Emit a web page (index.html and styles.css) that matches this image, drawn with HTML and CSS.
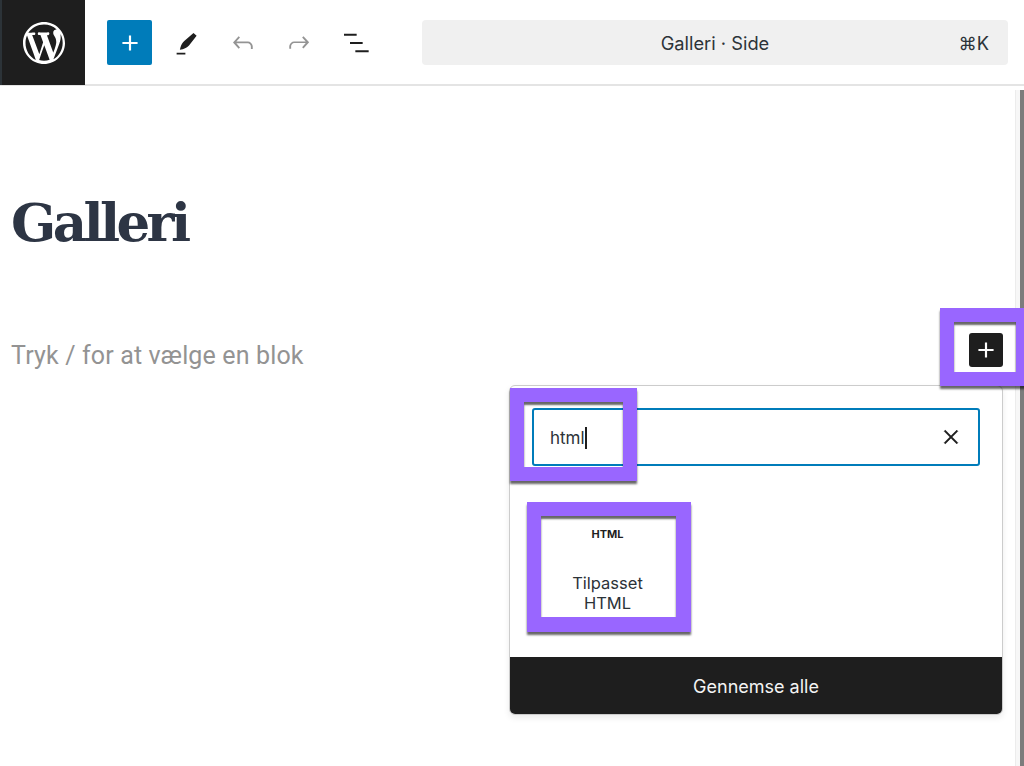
FILE: index.html
```html
<!DOCTYPE html>
<html lang="da">
<head>
<meta charset="utf-8">
<title>Galleri</title>
<link rel="stylesheet" href="styles.css">
</head>
<body>
<header class="topbar">
  <div class="logo">
    <svg width="42" height="42" viewBox="0 0 20 20" fill="#fff"><path d="M20 10c0-5.510-4.490-10-10-10C4.480 0 0 4.490 0 10c0 5.520 4.480 10 10 10 5.510 0 10-4.480 10-10zM7.780 15.370L4.370 6.220c.55-.020 1.170-.080 1.170-.080.5-.060.44-1.130-.060-1.110 0 0-1.450.11-2.370.11-.18 0-.37 0-.58-.010C4.120 2.820 6.890 1.200 10 1.200c2.320 0 4.430.87 6.030 2.340-.68-.11-1.650.39-1.650 1.580 0 .74.450 1.360.9 2.100.350.610.550 1.360.550 2.460 0 1.490-1.400 5-1.400 5l-3.030-8.370c.54-.020.82-.17.82-.17.5-.050.44-1.250-.060-1.220 0 0-1.440.12-2.380.12-.87 0-2.330-.12-2.330-.12-.5-.030-.560 1.200-.060 1.220l.92.080 1.260 3.410zM17.410 10c.24-.640.740-1.870.43-4.250.7 1.290 1.050 2.770 1.050 4.250 0 3.290-1.730 6.240-4.400 7.780.97-2.590 1.940-5.200 2.920-7.780zM6.100 18.090C3.120 16.650 1.200 13.530 1.200 10c0-1.300.23-2.480.72-3.590C3.250 10.030 4.580 13.660 6.100 18.090zM10.130 11.120l2.550 6.910c-.86.3-1.740.45-2.680.45-.79 0-1.570-.11-2.300-.33.8-2.360 1.590-4.700 2.430-7.030z"/></svg>
  </div>
  <div class="tools">
    <button class="tool add" aria-label="Tilføj">
      <svg width="26" height="26" viewBox="0 0 24 24"><path d="M11 5h2v6h6v2h-6v6h-2v-6H5v-2h6z" fill="#fff"/></svg>
    </button>
    <span class="tool">
      <svg width="30" height="30" viewBox="0 0 24 24"><path d="M20.500 6.200 18 3.900 10.600 10.300c-1.300 1.200-2.500 3-3 5.100l-.5 2 2.300-.5c2-.4 3.600-1.500 5-2.900zM4.500 19.700h7v1.500h-7z" fill="#1e1e1e"/></svg>
    </span>
    <span class="tool">
      <svg width="30" height="30" viewBox="0 0 24 24"><path d="M18.300 11.700c-.6-.6-1.400-.9-2.300-.9H6.700l2.900-3.300-1.100-1-4.500 5L8.500 16.500l1.100-1-2.900-3.300H16c.5 0 .9.200 1.300.5.900.7 1 1.600 1 2.500v1.500h1.500V15c0-1.200-.4-2.400-1.500-3.300z" fill="#949494"/></svg>
    </span>
    <span class="tool">
      <svg width="30" height="30" viewBox="0 0 24 24"><path d="M15.600 6.500l-1.100 1 2.900 3.300H8c-.9 0-1.700.3-2.300.9-1.100.9-1.500 2.100-1.500 3.300v1.500h1.500V15c0-.9.100-1.800 1-2.500.4-.3.800-.5 1.300-.5h9.400l-2.900 3.300 1.100 1 4.500-5z" fill="#949494"/></svg>
    </span>
    <span class="tool">
      <svg width="32" height="32" viewBox="0 0 24 24"><path d="M3 5h9.500v1.500H3zM7.500 11.250H17v1.500H7.500zM11.500 17.500H21.500V19H11.500z" fill="#1e1e1e"/></svg>
    </span>
  </div>
  <div class="command">
    <span class="command-title">Galleri · Side</span>
    <span class="command-key">⌘K</span>
  </div>
</header>

<main class="canvas">
  <h1 class="title">Galleri</h1>
  <p class="placeholder">Tryk / for at vælge en blok</p>
  <button class="inline-add" aria-label="Tilføj blok">
    <svg width="26" height="26" viewBox="0 0 24 24"><path d="M11 5h2v6h6v2h-6v6h-2v-6H5v-2h6z" fill="#fff"/></svg>
  </button>

  <section class="popover">
    <div class="search">
      <div class="search-field">
        <span class="search-text">html</span><span class="caret"></span>
        <svg class="search-clear" width="26" height="26" viewBox="0 0 24 24"><path d="M12 13.060l5.300 5.300 1.060-1.060-5.300-5.300 5.300-5.300-1.060-1.060-5.300 5.300-5.300-5.300-1.060 1.060 5.300 5.300-5.300 5.300 1.060 1.060z" fill="#1e1e1e" stroke="#1e1e1e" stroke-width=".4"/></svg>
      </div>
    </div>
    <div class="results">
      <div class="block-item">
        <span class="block-icon">HTML</span>
        <span class="block-label">Tilpasset HTML</span>
      </div>
    </div>
    <div class="browse">Gennemse alle</div>
  </section>

  <div class="scrollbar"></div>
  <div class="mark mark-add"></div>
  <div class="mark mark-search"></div>
  <div class="mark mark-item"></div>
</main>
</body>
</html>
```

FILE: styles.css
```css
* { box-sizing: border-box; }

html, body {
  margin: 0;
  height: 766px;
  overflow: hidden;
  background: #fff;
  font-family: Inter, "Liberation Sans", sans-serif;
  color: #1e1e1e;
}

.topbar {
  display: flex;
  align-items: center;
  height: 86px;
  padding-top: 1px;
  border-bottom: 2px solid #e4e4e4;
}

.logo {
  display: flex;
  align-items: center;
  justify-content: center;
  flex: none;
  width: 85px;
  height: 85px;
  margin-top: -1px;
  margin-bottom: -1px;
  background: #1e1e1e;
  border-left: 2px solid #2c3338;
}

.tools {
  display: flex;
  align-items: center;
  gap: 11.5px;
  margin-left: 22px;
}

.tool {
  display: flex;
  align-items: center;
  justify-content: center;
  width: 45px;
  height: 45px;
  padding: 0;
  border: 0;
  background: none;
}

.add {
  background: #007cba;
  border-radius: 2px;
}

.command {
  position: relative;
  display: flex;
  align-items: center;
  justify-content: center;
  width: 586px;
  height: 45px;
  margin-left: 44px;
  background: #f0f0f0;
  border-radius: 4px;
  font-size: 18.300px;
  color: #2c3338;
}

.command-key {
  position: absolute;
  right: 19px;
}

.canvas {
  position: relative;
  height: 680px;
  padding: 103px 0 0 11px;
}

.title {
  margin: 0;
  font-family: "DejaVu Serif", serif;
  font-size: 53px;
  line-height: 66px;
  font-weight: 700;
  letter-spacing: -3.600px;
  color: #2d3544;
}

.placeholder {
  margin: 82px 0 0;
  font-family: Roboto, sans-serif;
  font-size: 25px;
  line-height: 38px;
  letter-spacing: .15px;
  color: #939393;
}

.inline-add {
  position: absolute;
  left: 969px;
  top: 247px;
  display: flex;
  align-items: center;
  justify-content: center;
  width: 34px;
  height: 34px;
  padding: 0;
  border: 0;
  border-radius: 3px;
  background: #1e1e1e;
}

.popover {
  position: absolute;
  left: 509px;
  top: 299px;
  display: flex;
  flex-direction: column;
  width: 494px;
  height: 330px;
  background: #fff;
  border: 1px solid #ccc;
  border-radius: 6px;
  box-shadow: 0 3px 6px rgba(0, 0, 0, .08);
  overflow: hidden;
}

.search { padding: 22px 22px 0; }

.search-field {
  position: relative;
  display: flex;
  align-items: center;
  height: 58px;
  padding: 2px 0 0 16px;
  border: 2px solid #007cba;
  border-radius: 3px;
  font-size: 17px;
  color: #2c3338;
}

.caret {
  width: 2px;
  height: 22px;
  background: #1e1e1e;
}

.search-clear {
  position: absolute;
  right: 14px;
  top: 14px;
}

.results {
  flex: 1;
  padding: 61px 0 0 31px;
}

.block-item {
  display: flex;
  flex-direction: column;
  align-items: center;
  width: 133px;
  text-align: center;
}

.block-icon {
  font-size: 11px;
  line-height: 14px;
  font-weight: 700;
}

.block-label {
  width: 90px;
  margin-top: 32px;
  font-size: 16.500px;
  line-height: 20px;
  color: #2c3338;
}

.browse {
  display: flex;
  align-items: center;
  justify-content: center;
  flex: none;
  height: 57px;
  padding-top: 2px;
  background: #1e1e1e;
  color: #f4f4f4;
  font-size: 18px;
}

.mark {
  position: absolute;
  border: 14px solid #96f;
  box-shadow: 0 3px 2px rgba(0, 0, 0, .6), inset 0 3px 2px rgba(0, 0, 0, .6);
}

.mark-add {
  left: 940px;
  top: 222px;
  width: 90px;
  height: 78px;
}

.mark-search {
  left: 510px;
  top: 302px;
  width: 127px;
  height: 93px;
}

.mark-item {
  left: 527px;
  top: 416px;
  width: 164px;
  height: 130px;
  border-width: 14px 15px 15px 14px;
}

.scrollbar {
  position: absolute;
  right: 0;
  top: 4px;
  bottom: 0;
  width: 9px;
  background: #f7f7f7;
  border-left: 1px solid #ececec;
  border-right: 4px solid #7c7c7c;
}
```
